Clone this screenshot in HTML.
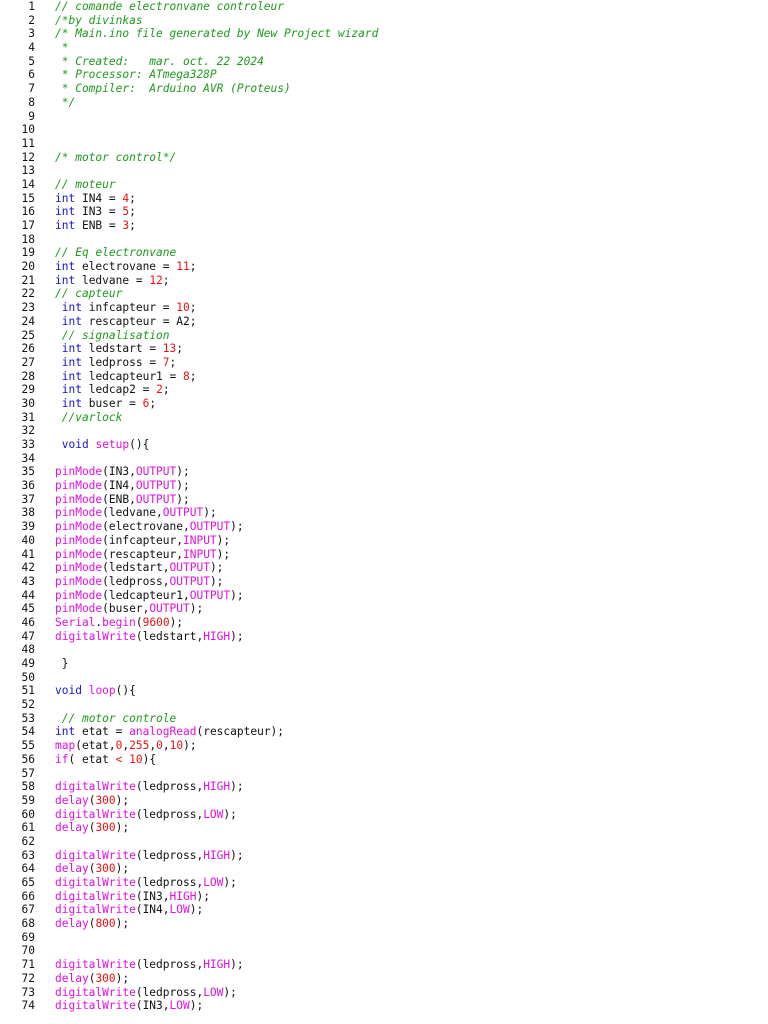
<!DOCTYPE html>
<html><head><meta charset="utf-8"><style>
body{margin:0;background:#fff;width:768px;height:1024px;overflow:hidden}
pre{margin:0;position:absolute;top:0px;font-family:"DejaVu Sans Mono",monospace;font-size:11.2px;line-height:13.68px;color:#111}
#n{left:0;width:35px;text-align:right}
#c{left:55px}
.c{color:#1e9a1e;font-style:italic}.k{color:#1515d0}.f{color:#e010e0}.r{color:#f01010}
</style></head><body>
<pre id="n">1
2
3
4
5
6
7
8
9
10
11
12
13
14
15
16
17
18
19
20
21
22
23
24
25
26
27
28
29
30
31
32
33
34
35
36
37
38
39
40
41
42
43
44
45
46
47
48
49
50
51
52
53
54
55
56
57
58
59
60
61
62
63
64
65
66
67
68
69
70
71
72
73
74</pre>
<pre id="c"><span class="c">// comande electronvane controleur
/*by divinkas
/* Main.ino file generated by New Project wizard
 *
 * Created:   mar. oct. 22 2024
 * Processor: ATmega328P
 * Compiler:  Arduino AVR (Proteus)
 */</span>



<span class="c">/* motor control*/</span>

<span class="c">// moteur</span>
<span class="k">int</span> IN4 = <span class="r">4</span>;
<span class="k">int</span> IN3 = <span class="r">5</span>;
<span class="k">int</span> ENB = <span class="r">3</span>;

<span class="c">// Eq electronvane</span>
<span class="k">int</span> electrovane = <span class="r">11</span>;
<span class="k">int</span> ledvane = <span class="r">12</span>;
<span class="c">// capteur</span>
 <span class="k">int</span> infcapteur = <span class="r">10</span>;
 <span class="k">int</span> rescapteur = A2;
 <span class="c">// signalisation</span>
 <span class="k">int</span> ledstart = <span class="r">13</span>;
 <span class="k">int</span> ledpross = <span class="r">7</span>;
 <span class="k">int</span> ledcapteur1 = <span class="r">8</span>;
 <span class="k">int</span> ledcap2 = <span class="r">2</span>;
 <span class="k">int</span> buser = <span class="r">6</span>;
 <span class="c">//varlock</span>

 <span class="k">void</span> <span class="f">setup</span>(){

<span class="f">pinMode</span>(IN3,<span class="f">OUTPUT</span>);
<span class="f">pinMode</span>(IN4,<span class="f">OUTPUT</span>);
<span class="f">pinMode</span>(ENB,<span class="f">OUTPUT</span>);
<span class="f">pinMode</span>(ledvane,<span class="f">OUTPUT</span>);
<span class="f">pinMode</span>(electrovane,<span class="f">OUTPUT</span>);
<span class="f">pinMode</span>(infcapteur,<span class="f">INPUT</span>);
<span class="f">pinMode</span>(rescapteur,<span class="f">INPUT</span>);
<span class="f">pinMode</span>(ledstart,<span class="f">OUTPUT</span>);
<span class="f">pinMode</span>(ledpross,<span class="f">OUTPUT</span>);
<span class="f">pinMode</span>(ledcapteur1,<span class="f">OUTPUT</span>);
<span class="f">pinMode</span>(buser,<span class="f">OUTPUT</span>);
<span class="f">Serial</span>.<span class="f">begin</span>(<span class="r">9600</span>);
<span class="f">digitalWrite</span>(ledstart,<span class="f">HIGH</span>);

 }

<span class="k">void</span> <span class="f">loop</span>(){

 <span class="c">// motor controle</span>
<span class="k">int</span> etat = <span class="f">analogRead</span>(rescapteur);
<span class="f">map</span>(etat,<span class="r">0</span>,<span class="r">255</span>,<span class="r">0</span>,<span class="r">10</span>);
<span class="f">if</span>( etat <span class="r">&lt;</span> <span class="r">10</span>){

<span class="f">digitalWrite</span>(ledpross,<span class="f">HIGH</span>);
<span class="f">delay</span>(<span class="r">300</span>);
<span class="f">digitalWrite</span>(ledpross,<span class="f">LOW</span>);
<span class="f">delay</span>(<span class="r">300</span>);

<span class="f">digitalWrite</span>(ledpross,<span class="f">HIGH</span>);
<span class="f">delay</span>(<span class="r">300</span>);
<span class="f">digitalWrite</span>(ledpross,<span class="f">LOW</span>);
<span class="f">digitalWrite</span>(IN3,<span class="f">HIGH</span>);
<span class="f">digitalWrite</span>(IN4,<span class="f">LOW</span>);
<span class="f">delay</span>(<span class="r">800</span>);


<span class="f">digitalWrite</span>(ledpross,<span class="f">HIGH</span>);
<span class="f">delay</span>(<span class="r">300</span>);
<span class="f">digitalWrite</span>(ledpross,<span class="f">LOW</span>);
<span class="f">digitalWrite</span>(IN3,<span class="f">LOW</span>);</pre>
</body></html>
